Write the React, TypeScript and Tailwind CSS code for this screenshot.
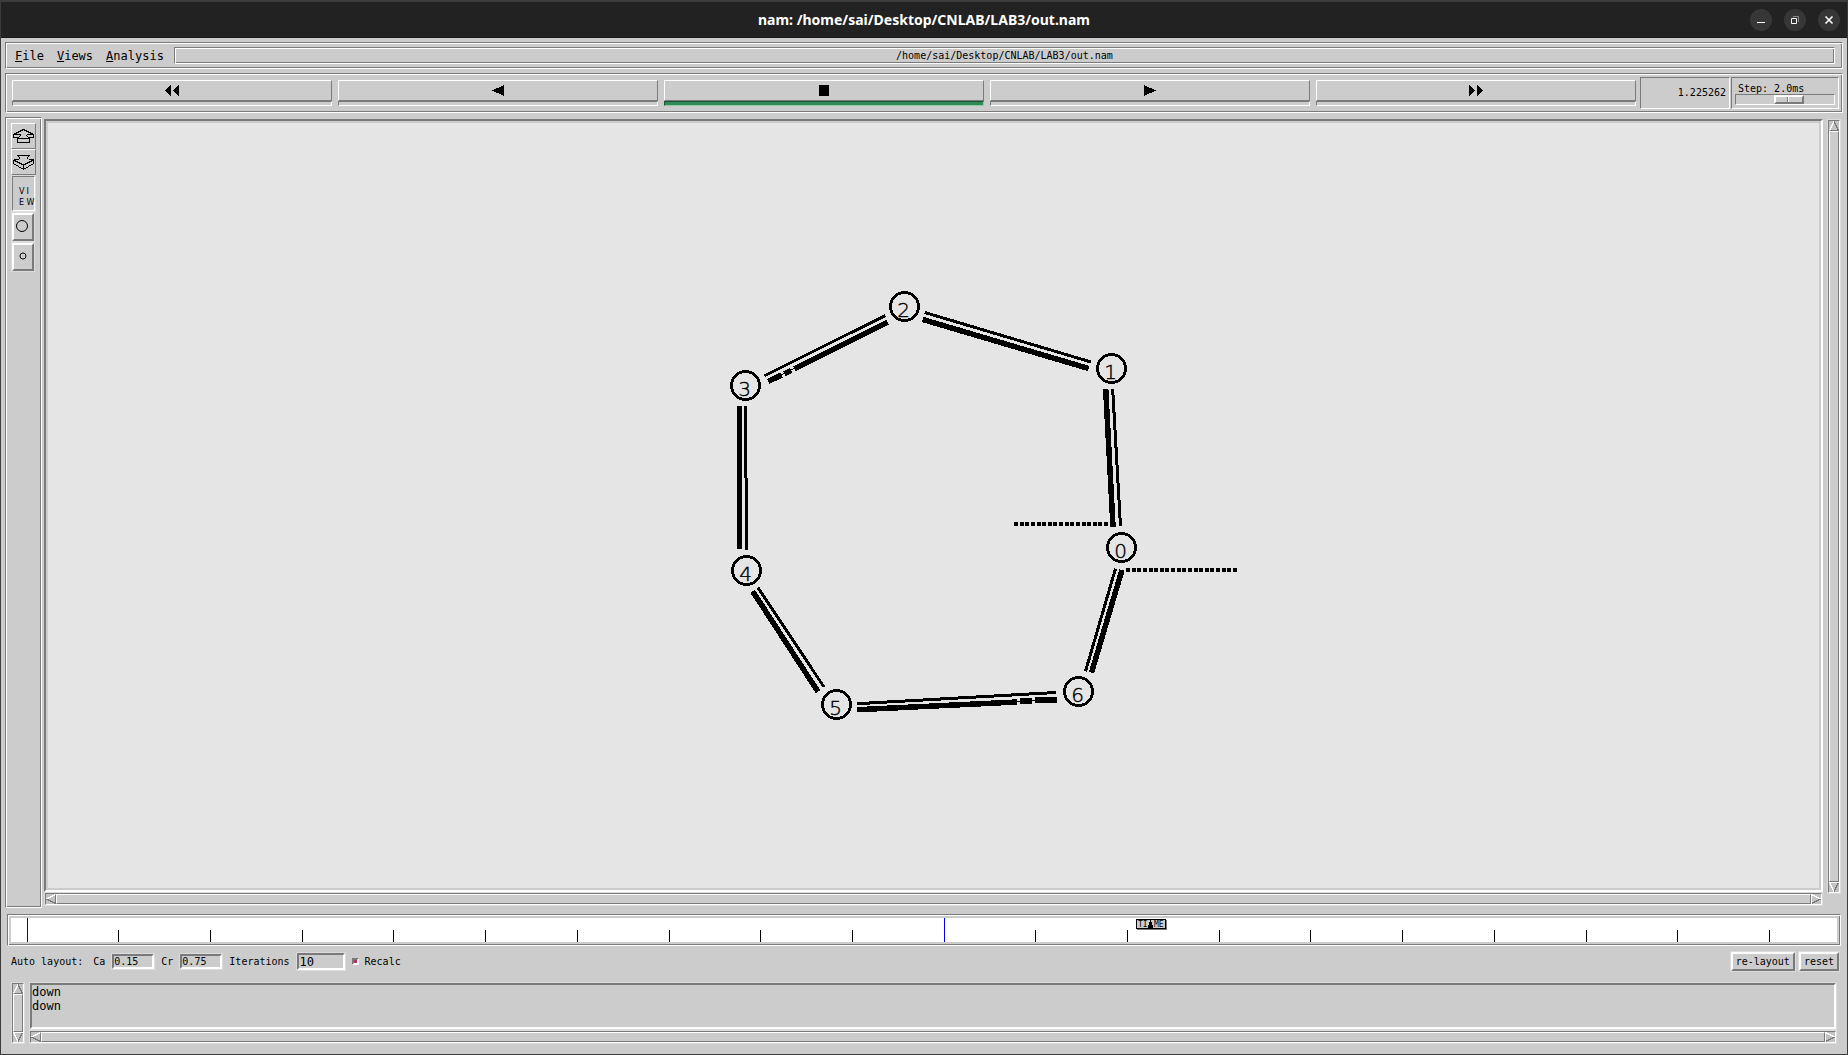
import React from "react";

const groove =
  "border border-t-[#7a7a7a] border-l-[#7a7a7a] border-r-white border-b-white shadow-[inset_1px_1px_#fff,inset_-1px_-1px_#7a7a7a] p-px";
const sunken = "border border-t-[#7a7a7a] border-l-[#7a7a7a] border-r-white border-b-white";
const raised = "border border-t-white border-l-white border-r-[#7a7a7a] border-b-[#7a7a7a]";
const raised2 = "border-2 border-t-white border-l-white border-r-[#7a7a7a] border-b-[#7a7a7a]";
const sunken2 = "border-2 border-t-[#7a7a7a] border-l-[#7a7a7a] border-r-white border-b-white";
const halo = "outline outline-1 outline-[#dcdcdc]";
const mono = "font-['DejaVu_Sans_Mono','Liberation_Mono',monospace]";

type Dir = "up" | "down" | "left" | "right";

const arrows: Record<Dir, { light: string; dark: string }> = {
  up: { light: "M0.5 9.5 L5 0.5", dark: "M5 0.5 L9.5 9.5 H0.5" },
  down: { light: "M9.5 0.5 H0.5 L5 9.5", dark: "M5 9.5 L9.5 0.5" },
  left: { light: "M0.5 5 L9.5 0.5", dark: "M9.5 0.5 V9.5 L0.5 5" },
  right: { light: "M0.5 9.5 V0.5 L9.5 5", dark: "M9.5 5 L0.5 9.5" },
};

function Arrow({ dir }: { dir: Dir }) {
  return (
    <button aria-label={"Scroll " + dir} className="block size-2.5 shrink-0 bg-[#c3c3c3]">
      <svg viewBox="0 0 10 10" className="block size-2.5" fill="none" shapeRendering="crispEdges">
        <path d={arrows[dir].dark} stroke="#7a7a7a" />
        <path d={arrows[dir].light} stroke="#fff" strokeWidth="1.4" />
      </svg>
    </button>
  );
}

function Scrollbar({ vertical }: { vertical?: boolean }) {
  return (
    <div className={`flex ${vertical ? "w-3 flex-col" : "h-3"} shrink-0 ${sunken} ${halo}`}>
      <Arrow dir={vertical ? "up" : "left"} />
      <div className={`flex-1 ${raised}`} />
      <Arrow dir={vertical ? "down" : "right"} />
    </div>
  );
}

const transport = [
  { label: "Rewind", w: 15, d: "M6 0 V11 L0 5.5 Z M14 0 V11 L8 5.5 Z" },
  { label: "Play backward", w: 12, d: "M12 0 V11 L0 5.5 Z" },
  { label: "Stop", w: 10, d: "M0 0 H10 V11 H0 Z", active: true },
  { label: "Play", w: 12, d: "M0 0 V11 L12 5.5 Z" },
  { label: "Fast forward", w: 15, d: "M0 0 V11 L6.5 5.5 Z M8 0 V11 L14.5 5.5 Z" },
];

function TransportButton({ label, w, d, active }: { label: string; w: number; d: string; active?: boolean }) {
  return (
    <button aria-label={label} className="flex flex-1 flex-col">
      <span className={`flex h-[21px] w-full items-center justify-center ${raised}`}>
        <svg width={w} height="11" viewBox={`0 0 ${w} 11`} shapeRendering="crispEdges">
          <path d={d} />
        </svg>
      </span>
      <span
        className={
          active
            ? "h-[5px] w-full border border-t-[#1b5334] border-l-[#1b5334] border-r-[#8fc9a8] border-b-[#8fc9a8] bg-[#2e8b57]"
            : `h-[5px] w-full ${sunken}`
        }
      />
    </button>
  );
}

const nodes = [
  { id: "0", x: 1121.5, y: 547.5 },
  { id: "1", x: 1111.5, y: 368.5 },
  { id: "2", x: 904.5, y: 306.5 },
  { id: "3", x: 745.5, y: 385.5 },
  { id: "4", x: 746.5, y: 570.5 },
  { id: "5", x: 836.5, y: 704.5 },
  { id: "6", x: 1078.5, y: 691.5 },
];

const thinLinks = [
  "M764.5 375.7 L885.3 315.5",
  "M924.7 312.5 L1090.7 361.9",
  "M1112.7 389.3 L1120.5 526.3",
  "M745.5 406 V478 M746.5 478 V549.5",
  "M758 587.7 L824 687",
  "M857.3 703.7 L1056 692.5",
  "M1115.5 568.7 L1085.5 671.3",
];

const packets = [
  "M768.3 381.5 L781.5 375 M784.5 373.6 L791 370.4 M794.5 368.6 L887.7 322.3",
  "M922.7 319.5 L1088.7 368.5",
  "M1105.7 389.3 L1113 526.7",
  "M739.5 406.3 V549",
  "M752.7 591.3 L818 691.7",
  "M857.3 709.7 L1017 702 M1019.5 701 H1031.5 M1035 700 H1056.7",
  "M1122 570 L1091.5 672.7",
];

function Topology() {
  return (
    <svg viewBox="48 123 1771 765" className="block size-full" role="img" aria-label="Network topology">
      <g stroke="#000" fill="none" shapeRendering="crispEdges">
        <path d={thinLinks.join(" ")} strokeWidth="3" />
        <path d={packets.join(" ")} strokeWidth="5.5" />
        <path d="M768 381.5 L800 365.6 M1010 702 L1040 700.5" strokeWidth="1" />
        <path d="M1014 524 H1108.5" strokeWidth="4" strokeDasharray="4 1.63" />
        <path d="M1126 570 H1237.5" strokeWidth="4" strokeDasharray="4 1.63" />
      </g>
      {nodes.map((n) => (
        <g key={n.id}>
          <circle cx={n.x} cy={n.y} r="14" fill="none" stroke="#000" strokeWidth="2.8" shapeRendering="crispEdges" />
          <text
            x={n.x - 1}
            y={n.y + 10}
            textAnchor="middle"
            stroke="#000"
            strokeWidth="0.4"
            className="font-['DejaVu_Sans',sans-serif] text-[20px] font-extralight"
          >
            {n.id}
          </text>
        </g>
      ))}
    </svg>
  );
}

function SideTools() {
  return (
    <div className={`flex w-[37px] shrink-0 flex-col items-start ${groove}`}>
      <div className="flex flex-col pt-1 pl-1">
        <button aria-label="Zoom in" className={`flex h-[26px] w-[25px] items-center justify-center ${raised}`}>
          <svg width="21" height="14" viewBox="0 0 21 14" fill="none" stroke="#000" shapeRendering="crispEdges">
            <path d="M10.5 0.5 L0.5 5.5 V8.5 H5.5 L8 6 M10.5 0.5 L20.5 5.5 V8.5 H15.5 L13 6 M0.5 5.5 H7.5 M20.5 5.5 H13.5 M4.5 9.5 H16.5 V13.5 H4.5 Z" />
          </svg>
        </button>
        <button aria-label="Zoom out" className={`flex h-[26px] w-[25px] items-center justify-center ${raised}`}>
          <svg width="21" height="15" viewBox="0 0 21 15" fill="none" stroke="#000" shapeRendering="crispEdges">
            <path d="M4.5 0.5 H16.5 M4.5 0.5 L7 3 L5.5 4.5 M16.5 0.5 L14 3 L15.5 4.5 M0.5 4.5 H5.5 M20.5 4.5 H15.5 M0.5 4.5 V8.5 L10.5 14.5 L20.5 8.5 V4.5 M0.5 5 L10.5 10 L20.5 5 M10.5 10 V14.5" />
          </svg>
        </button>
        <div className="flex flex-col gap-0.5 pt-px pl-px">
          <button
            className={`grid h-[35px] w-[23px] grid-cols-2 content-center items-center pt-1.5 pl-1.5 text-left font-['DejaVu_Sans',sans-serif] text-[8px] leading-[11px] ${sunken} ${halo}`}
          >
            <span>V</span>
            <span>I</span>
            <span>E</span>
            <span>W</span>
          </button>
          <button
            aria-label="Larger nodes"
            className={`flex h-7 w-[22px] items-center justify-center pr-0.5 pb-0.5 ${raised2} ${halo}`}
          >
            <svg width="12" height="12" viewBox="0 0 12 12" fill="none" stroke="#000">
              <circle cx="6" cy="6" r="5.5" />
            </svg>
          </button>
          <button
            aria-label="Smaller nodes"
            className={`flex h-7 w-[22px] items-center justify-center pb-0.5 ${raised2} ${halo}`}
          >
            <svg width="8" height="8" viewBox="0 0 8 8" fill="none" stroke="#000">
              <circle cx="4" cy="4" r="3" />
            </svg>
          </button>
        </div>
      </div>
    </div>
  );
}

const tickXs = [107, 199, 291, 382, 474, 566, 658, 749, 841, 1024, 1116, 1208, 1299, 1391, 1483, 1575, 1666, 1758];

function Timeline() {
  return (
    <div className={`h-8 shrink-0 ${groove}`}>
      <div className="h-full border-2 border-[#cccccc] bg-white">
        <svg viewBox="0 0 1826 24" preserveAspectRatio="none" className="block h-6 w-full" shapeRendering="crispEdges">
          <rect x="16" y="0" width="1" height="24" fill="#0000cd" />
          <rect x="933" y="0" width="1" height="24" fill="#0000ee" />
          {tickXs.map((x) => (
            <rect key={x} x={x} y="12" width="1" height="12" />
          ))}
          <rect x="1126" y="2" width="30" height="10" fill="#7a7a7a" />
          <rect x="1125.5" y="1.5" width="29" height="9" fill="#cccccc" stroke="#000" />
          <text x="1127" y="9" className="font-['DejaVu_Sans_Mono',monospace] text-[8px]">
            TI
          </text>
          <text x="1143" y="9" className="font-['DejaVu_Sans_Mono',monospace] text-[8px]">
            ME
          </text>
          <path d="M1139 1 H1140 V4 H1141 V7 H1142 V11 H1137 V7 H1138 V4 H1139 Z" />
        </svg>
      </div>
    </div>
  );
}

const windowButtons = [
  { label: "Minimize", art: <path d="M7 13.5 H15" stroke="#fff" /> },
  {
    label: "Restore",
    art: (
      <>
        <path d="M7.5 9.5 H12.5 V14.5 H7.5 Z" stroke="#fff" />
        <path d="M9 7.5 H14.5 V13" stroke="#8a8a8a" />
      </>
    ),
  },
  { label: "Close", art: <path d="M7.5 7.5 L14.5 14.5 M14.5 7.5 L7.5 14.5" stroke="#fff" strokeWidth="1.6" /> },
];

export default function App() {
  return (
    <div className="flex h-screen min-h-[600px] flex-col border-x border-b border-[#3c3c3c] bg-[#cccccc] text-black">
      <header className="grid h-[38px] shrink-0 grid-cols-[1fr_auto_1fr] items-center border-t-2 border-b border-t-[#3c3c3c] border-b-[#181818] bg-[#222222]">
        <h1 className="col-start-2 font-['Noto_Sans',sans-serif] text-sm font-bold text-white">
          nam: /home/sai/Desktop/CNLAB/LAB3/out.nam
        </h1>
        <div className="flex justify-end gap-3 pr-[7px]">
          {windowButtons.map((b) => (
            <button key={b.label} aria-label={b.label} className="size-[22px] rounded-full bg-[#373737]">
              <svg viewBox="0 0 22 22" className="block size-[22px]" fill="none">
                {b.art}
              </svg>
            </button>
          ))}
        </div>
      </header>

      <main className="flex min-h-0 flex-1 flex-col gap-1 px-1 pt-1">
        <nav className={`flex h-[27px] shrink-0 items-center ${groove}`}>
          <div className={`flex shrink-0 gap-[13px] pr-2.5 pl-2 text-[12px] leading-4 ${mono}`}>
            <button>
              <u>F</u>ile
            </button>
            <button>
              <u>V</u>iews
            </button>
            <button>
              <u>A</u>nalysis
            </button>
          </div>
          <div
            className={`mr-1.5 flex h-[17px] flex-1 items-center justify-center text-[10px] leading-3 ${groove} ${mono}`}
          >
            /home/sai/Desktop/CNLAB/LAB3/out.nam
          </div>
        </nav>

        <section className={`h-10 shrink-0 ${groove}`}>
          <div className="flex h-full py-0.5 pr-0.5 pl-[5px]">
            <div className="flex flex-1 gap-1.5 py-[3px]">
              {transport.map((t) => (
                <TransportButton key={t.label} {...t} />
              ))}
            </div>
            <div
              className={`ml-1 flex w-[90px] items-center justify-end pr-[3px] text-[10px] leading-3 ${sunken} ${mono}`}
            >
              1.225262
            </div>
            <div className={`ml-px flex w-[108px] flex-col px-[3px] pt-[5px] ${sunken} ${mono}`}>
              <label htmlFor="step" className="pl-[3px] text-[10px] leading-[11px]">
                Step: 2.0ms
              </label>
              <input
                id="step"
                type="range"
                defaultValue="56"
                className={`h-[11px] w-full appearance-none ${sunken} [&::-webkit-slider-thumb]:box-border [&::-webkit-slider-thumb]:h-[9px] [&::-webkit-slider-thumb]:w-[30px] [&::-webkit-slider-thumb]:appearance-none [&::-webkit-slider-thumb]:border-2 [&::-webkit-slider-thumb]:border-t-white [&::-webkit-slider-thumb]:border-r-[#7a7a7a] [&::-webkit-slider-thumb]:border-b-[#7a7a7a] [&::-webkit-slider-thumb]:border-l-white [&::-webkit-slider-thumb]:bg-[linear-gradient(90deg,#ccc_11px,#7a7a7a_11px_12px,#fff_12px_13px,#ccc_13px)]`}
              />
            </div>
          </div>
        </section>

        <section className="flex min-h-0 flex-1">
          <SideTools />
          <div className="flex min-w-0 flex-1 flex-col pt-0.5 pb-[3px] pl-0.5">
            <div className={`min-h-0 flex-1 p-0.5 ${sunken2}`}>
              <div className="h-full bg-[#e5e5e5]">
                <Topology />
              </div>
            </div>
            <div className="mx-px mt-px flex flex-col">
              <Scrollbar />
            </div>
          </div>
          <div className="mt-[3px] mr-[3px] mb-[15px] ml-[5px] flex">
            <Scrollbar vertical />
          </div>
        </section>
      </main>

      <footer className="flex shrink-0 flex-col px-1.5 pt-1.5 pb-[11px]">
        <Timeline />
        <form className={`mt-[5px] flex h-[21px] items-center gap-1.5 pl-1 text-[10px] leading-3 ${mono}`}>
          <span className="mr-1">Auto layout:</span>
          <label htmlFor="ca">Ca</label>
          <input id="ca" defaultValue="0.15" className={`mx-px h-[15px] w-[42px] ${sunken2} ${halo}`} />
          <label htmlFor="cr">Cr</label>
          <input id="cr" defaultValue="0.75" className={`mx-px h-[15px] w-[42px] ${sunken2} ${halo}`} />
          <label htmlFor="it">Iterations</label>
          <input id="it" defaultValue="10" className={`mx-px h-[17px] w-[48px] pl-px text-[12px] ${sunken2} ${halo}`} />
          <input
            id="recalc"
            type="checkbox"
            defaultChecked
            className={`size-[7px] appearance-none checked:bg-[#b03060] ${sunken2}`}
          />
          <label htmlFor="recalc">Recalc</label>
          <button type="button" className={`mr-1 ml-auto h-[19px] px-[3px] ${raised2} ${halo}`}>
            re-layout
          </button>
          <button type="button" className={`-ml-1.5 mr-0.5 h-[19px] px-[3px] ${raised2} ${halo}`}>
            reset
          </button>
        </form>
        <div className="mt-[11px] flex gap-1.5 pr-[5px] pl-[5px]">
          <Scrollbar vertical />
          <div className="flex flex-1 flex-col gap-0.5">
            <textarea
              aria-label="Event log"
              readOnly
              value={"down\ndown"}
              className={`block h-[46px] w-full resize-none overflow-hidden text-[12px] leading-[14px] ${sunken2} ${halo} ${mono}`}
            />
            <Scrollbar />
          </div>
        </div>
      </footer>
    </div>
  );
}
